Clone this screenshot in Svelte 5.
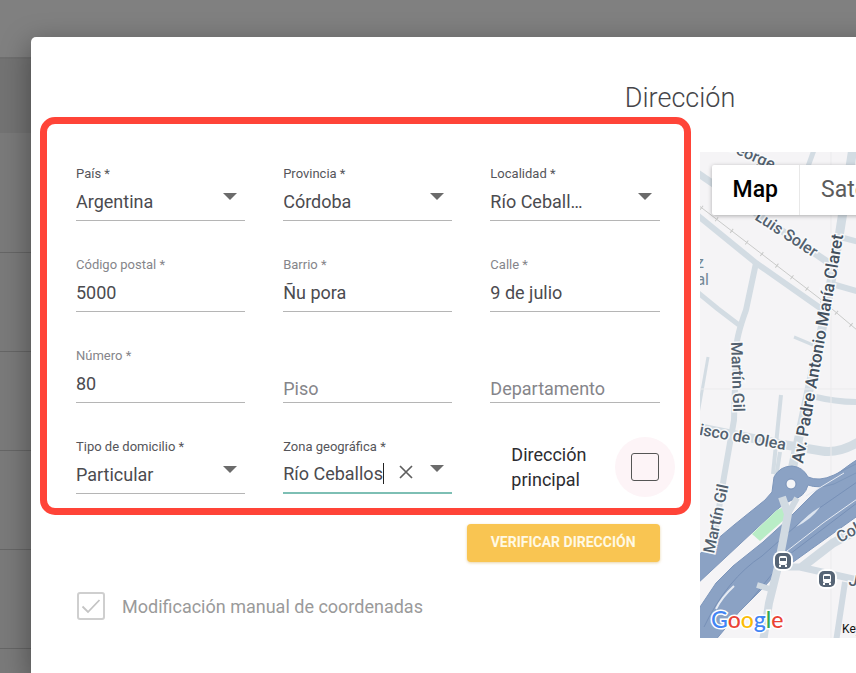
<script lang="ts">
	type Field = {
		id: string;
		label: string;
		value: string;
		kind: 'select' | 'input' | 'combo';
	};

	let fields: Field[] = $state([
		{ id: 'pais', label: 'País *', value: 'Argentina', kind: 'select' },
		{ id: 'provincia', label: 'Provincia *', value: 'Córdoba', kind: 'select' },
		{ id: 'localidad', label: 'Localidad *', value: 'Río Ceballos', kind: 'select' },
		{ id: 'cp', label: 'Código postal *', value: '5000', kind: 'input' },
		{ id: 'barrio', label: 'Barrio *', value: 'Ñu pora', kind: 'input' },
		{ id: 'calle', label: 'Calle *', value: '9 de julio', kind: 'input' },
		{ id: 'numero', label: 'Número *', value: '80', kind: 'input' },
		{ id: 'piso', label: 'Piso', value: '', kind: 'input' },
		{ id: 'depto', label: 'Departamento', value: '', kind: 'input' },
		{ id: 'tipo', label: 'Tipo de domicilio *', value: 'Particular', kind: 'select' },
		{ id: 'zona', label: 'Zona geográfica *', value: 'Río Ceballos', kind: 'combo' }
	]);

	let principal = $state(false);
	let manual = $state(true);

	const streets = [
		{ d: 'M-4 20 L129 111', w: 7 },
		{ d: 'M-4 62 L56 111 L123 158', w: 6 },
		{ d: 'M56 111 L46 158 Q36 185 36 200 L34 268 L24 325 L12 400', w: 6 },
		{ d: 'M-4 139 L18 157 L39 173', w: 5 },
		{ d: 'M8 205 L-2 262', w: 3 },
		{ d: 'M153 -4 L139 85 L126 158 L92 318', w: 9 },
		{ d: 'M114 -2 L106 20', w: 5 },
		{ d: 'M140 85 L170 93', w: 6 },
		{ d: 'M132 132 L170 143', w: 6 },
		{ d: 'M94 185 L113 193', w: 3 },
		{ d: 'M116 245 Q140 251 170 250', w: 6 },
		{ d: 'M81 243 L73 322', w: 4 },
		{ d: 'M-4 275 L86 293 L122 299 Q142 302 166 285', w: 9 },
		{ d: 'M76 326 L80 300', w: 4 }
	];

	const logo = [
		['G', '#4285f4'],
		['o', '#ea4335'],
		['o', '#fbbc05'],
		['g', '#4285f4'],
		['l', '#34a853'],
		['e', '#ea4335']
	];
</script>

{#snippet arrow()}
	<svg class="arrow" width="14" height="7" viewBox="0 0 14 7" aria-hidden="true">
		<path d="M0 0H14L7 7Z" fill="#6b6b6b" />
	</svg>
{/snippet}

<div class="page">
	<div class="rows" aria-hidden="true">
		<div class="toolbar"></div>
		<div class="head"></div>
		<div class="row first"></div>
		<div class="row"></div>
		<div class="row"></div>
		<div class="row"></div>
		<div class="row"></div>
		<div class="row"></div>
	</div>

	<main class="dialog">
		<h1>Dirección</h1>
		<div class="content">
			<form>
				<div class="highlight">
					{#each fields as field (field.id)}
						<div class="field" class:empty={!field.value}>
							<label for={field.id} class:soft={field.kind === 'input'}>{field.label}</label>
							<div class="control" class:active={field.kind === 'combo'}>
								{#if field.kind === 'select'}
									<select id={field.id} bind:value={field.value}>
										<option>{field.value}</option>
									</select>
									{@render arrow()}
								{:else if field.kind === 'combo'}
									<input id={field.id} class="typed" bind:value={field.value} />
									<span class="caret"></span>
									<button
										class="clear"
										type="button"
										aria-label="Borrar"
										onclick={() => (field.value = '')}
									>
										<svg width="14" height="14" viewBox="0 0 14 14">
											<path d="M1 1L13 13M13 1L1 13" stroke="#5f5f5f" stroke-width="1.7" />
										</svg>
									</button>
									{@render arrow()}
								{:else}
									<input id={field.id} bind:value={field.value} />
								{/if}
							</div>
						</div>
					{/each}
					<div class="main-address">
						<label for="principal">Dirección principal</label>
						<span class="halo">
							<input id="principal" class="box" type="checkbox" bind:checked={principal} />
						</span>
					</div>
				</div>

				<button class="verify" type="button">VERIFICAR DIRECCIÓN</button>

				<div class="manual">
					<span class="tick">
						<input id="manual" class="box" type="checkbox" bind:checked={manual} disabled />
						{#if manual}
							<svg width="20" height="16" viewBox="0 0 20 16" aria-hidden="true">
								<path d="M1.500 8.500L7 14L18.500 2" fill="none" stroke="#c4c4c4" stroke-width="1.800" />
							</svg>
						{/if}
					</span>
					<label for="manual">Modificación manual de coordenadas</label>
				</div>
			</form>

			<section class="map" aria-label="Mapa">
				<svg class="tiles" width="100%" height="100%">
					<g fill="none" stroke="#d3dce3" stroke-linejoin="round">
						{#each streets as street}
							<path d={street.d} stroke-width={street.w} />
						{/each}
					</g>
					<path d="M0 237H700M131 0V486" stroke="#ebebed" />

					<!-- railway -->
					<path d="M-2 53L119 146L170 189" fill="none" stroke="#c9cac9" />
					<path
						d="M-2 53L119 146L170 189"
						fill="none"
						stroke="#c9cac9"
						stroke-width="5"
						stroke-dasharray="1 18"
						stroke-dashoffset="-4"
					/>

					<!-- motorway -->
					<g stroke="#7d96bb" stroke-width="1">
						<path
							d="M-4 461L16 431L33 414L63 390L86 369L107 348Q128 326 170 299V355L96 408L76 422L63 436L39 460L14 490H-4Z"
							fill="#8ba2c4"
						/>
						<path
							d="M-4 405L34 373L65 348L72 340L74 325Q80 314 92 314Q103 315 108 325Q119 330 134 323L170 305V314L134 332Q118 337 108 333Q105 345 92 348Q82 352 70 364L-4 433Z"
							fill="#8ba2c4"
						/>
					</g>
					<g fill="none" stroke="#7790b7">
						<path d="M4 475Q27 427 62 404L105 366L170 321" />
						<path d="M50 449L86 405L170 341" />
					</g>
					<path d="M96 375Q108 362 120 355Q112 367 96 375" fill="#dce4ef" />
					<g fill="none" stroke="#e6ebf3">
						<path d="M87 399L123 371L170 338" />
						<path d="M106 344L144 321" />
						<path d="M16 457Q22 445 34 434" stroke-width="2" />
					</g>
					<path d="M77 358L84 355L85 367L60 389L52 382Z" fill="#b9edc6" />
					<circle cx="91" cy="332" r="5" fill="#f5f5f7" stroke="#7790b7" />
					<g fill="none" stroke="#d1dae2">
						<path d="M82 345L88 362L78 415L69 451L63 490" stroke-width="8" />
						<path d="M97 346L88 362" stroke-width="6" />
						<path d="M79 415H100L153 427H170" stroke-width="7" />
						<path d="M102 415L133 391L170 371" stroke-width="9" />
						<path d="M145 430L136 490" stroke-width="6" />
						<path d="M57 433L70 437" stroke-width="6" />
					</g>

					{#each [[83, 409], [127, 427]] as [x, y]}
						<g transform="translate({x} {y})">
							<rect x="-10" y="-10" width="20" height="20" rx="8" fill="#fff" />
							<rect x="-8" y="-8" width="16" height="16" rx="5" fill="#566475" />
							<rect x="-4" y="-5" width="8" height="9" rx="2" fill="#fff" />
							<rect x="-3" y="-3" width="6" height="3" fill="#566475" />
							<path d="M-4 5h2M2 5h2" stroke="#fff" stroke-width="2" />
						</g>
					{/each}

					<g class="street-name">
						<text transform="translate(25 -3) rotate(24)">George</text>
						<text transform="translate(54 67) rotate(33)">Luis Soler</text>
						<text transform="translate(31 190) rotate(88)">Martín Gil</text>
						<text transform="translate(14 402) rotate(-78)">Martín Gil</text>
						<text transform="translate(103 312) rotate(-80)" class="avenue">
							Av. Padre Antonio María Claret
						</text>
						<text transform="translate(85 298) rotate(10)" text-anchor="end">
							Francisco de Olea
						</text>
						<text transform="translate(140 391) rotate(-28)">Colón</text>
						<text transform="translate(148 433) rotate(12)">Jujuy</text>
					</g>
					<g class="place">
						<text x="4" y="116" text-anchor="end">z</text>
						<text x="9" y="133" text-anchor="end">al</text>
					</g>
					<text class="logo" x="11" y="476">
						{#each logo as [letter, color]}<tspan fill={color}>{letter}</tspan>{/each}
					</text>
					<text class="shortcuts" x="142" y="481">Keyboard shortcuts</text>
				</svg>
				<div class="map-type">
					<button type="button" class="on">Map</button>
					<button type="button">Satellite</button>
				</div>
			</section>
		</div>
	</main>
</div>

<style>
	:global(body) {
		background: #7c7c7c;
		font-family: Roboto, 'Liberation Sans', sans-serif;
	}

	.page {
		position: relative;
		min-height: 100vh;
		overflow: hidden;
		display: flex;
	}

	.page * {
		box-sizing: border-box;
	}

	/* dimmed list behind the dialog */
	.rows {
		position: absolute;
		inset: 0;
		background: #7a7a7a;
	}

	.toolbar {
		height: 59px;
		background: #808080;
		border-bottom: 2px solid #6f6f6f;
	}

	.head {
		height: 74px;
		background: #737373;
	}

	.row {
		height: 99px;
		border-bottom: 1px solid #666;
	}

	.row.first {
		height: 120px;
	}

	.dialog {
		position: relative;
		flex: none;
		width: 152vw;
		margin: 37px 0 0 31px;
		background: #fff;
		border-radius: 5px 5px 0 0;
		box-shadow: 0 8px 28px 2px rgba(0, 0, 0, 0.35);
	}

	h1 {
		margin: 0;
		padding: 45px 3px 3px 0;
		font-size: 27px;
		font-weight: 300;
		line-height: 32px;
		text-align: center;
		color: #454549;
	}

	.content {
		display: flex;
		align-items: flex-start;
		gap: 9px;
	}

	form {
		flex: none;
		width: 50%;
		margin-left: 9px;
	}

	.highlight {
		display: grid;
		grid-template-columns: repeat(3, minmax(0, 1fr));
		gap: 36px 38px;
		padding: 42px 24px 14px 29px;
		border: 7px solid #ff4438;
		border-radius: 15px;
	}

	.field {
		display: grid;
		grid-template-rows: 16px 39px;
	}

	.field label {
		font-size: 13px;
		line-height: 16px;
		color: #55555a;
		white-space: nowrap;
	}

	.field label.soft {
		color: #85858a;
	}

	.control {
		display: flex;
		align-items: center;
		min-width: 0;
		border-bottom: 1px solid #b5b5b5;
	}

	.control.active {
		border-bottom: 2px solid #7dbfb4;
	}

	/* label rests on the line until there is a value */
	.empty label {
		grid-area: 2 / 1;
		padding-top: 14px;
		font-size: 18px;
		line-height: 22px;
		pointer-events: none;
	}

	.empty .control {
		grid-area: 2 / 1;
	}

	.control input,
	.control select {
		flex: 1;
		min-width: 0;
		width: 100%;
		height: 37px;
		padding: 0;
		border: 0;
		outline: 0;
		background: none;
		appearance: none;
		font: 18px Roboto, 'Liberation Sans', sans-serif;
		color: #4b4b4f;
	}

	.control select {
		margin-right: 49px;
		text-overflow: ellipsis;
	}

	.control .typed {
		flex: none;
		width: auto;
		field-sizing: content;
	}

	.caret {
		width: 1px;
		height: 21px;
		background: #222;
	}

	.clear {
		display: flex;
		margin: 0 17px 4px auto;
		padding: 0;
		border: 0;
		background: none;
	}

	.arrow {
		flex: none;
		margin: 0 8px 10px 0;
	}

	.main-address {
		display: flex;
		align-items: center;
		justify-content: space-between;
		padding-left: 21px;
		font-size: 18px;
		line-height: 25px;
		color: #2c2c30;
	}

	.main-address label {
		width: min-content;
	}

	.halo {
		display: grid;
		place-items: center;
		width: 60px;
		height: 60px;
		margin: -4px -15px;
		border-radius: 50%;
		background: #fdf4f7;
	}

	.box {
		appearance: none;
		width: 28px;
		height: 28px;
		margin: 0;
		border: 1px solid #555;
		border-radius: 3px;
	}

	.verify {
		display: block;
		height: 38px;
		margin: 9px 31px 0 auto;
		padding: 0 24px 2px;
		border: 0;
		border-radius: 4px;
		background: #f9c552;
		box-shadow: 0 1px 3px rgba(200, 150, 40, 0.4);
		font: 700 14px Roboto, 'Liberation Sans', sans-serif;
		color: #fff9e4;
	}

	.manual {
		display: flex;
		align-items: center;
		gap: 17px;
		margin: 30px 0 0 37px;
		font-size: 18px;
		color: #9a9a9a;
	}

	.tick {
		display: grid;
		place-items: center;
	}

	.tick > * {
		grid-area: 1 / 1;
	}

	.tick .box {
		border: 2px solid #cfcfcf;
	}

	.map {
		position: relative;
		flex: 1;
		height: 486px;
		margin-top: 35px;
		overflow: hidden;
		background: #f5f4f6;
	}

	.tiles {
		display: block;
	}

	.street-name {
		font-size: 16px;
		font-weight: 500;
		fill: #53616f;
		stroke: #f8f9fa;
		stroke-width: 3px;
		paint-order: stroke;
	}

	.avenue {
		font-size: 17px;
		fill: #43505e;
	}

	.place {
		font-size: 16px;
		fill: #738896;
	}

	.logo {
		font-family: Lato, Roboto, sans-serif;
		font-size: 23px;
		font-weight: 500;
		stroke: #fff;
		stroke-width: 3px;
		paint-order: stroke;
	}

	.shortcuts {
		font-size: 12px;
		fill: #111;
	}

	.map-type {
		position: absolute;
		top: 13px;
		left: 12px;
		display: flex;
		background: #fff;
		border-radius: 2px;
		box-shadow: 0 1px 4px rgba(0, 0, 0, 0.3);
	}

	.map-type button {
		height: 50px;
		padding: 0 21px 2px;
		border: 0;
		border-left: 1px solid #e8e8e8;
		background: none;
		font: 23px Roboto, 'Liberation Sans', sans-serif;
		color: #5c5c5c;
	}

	.map-type .on {
		border-left: 0;
		font-weight: 500;
		color: #000;
	}
</style>
